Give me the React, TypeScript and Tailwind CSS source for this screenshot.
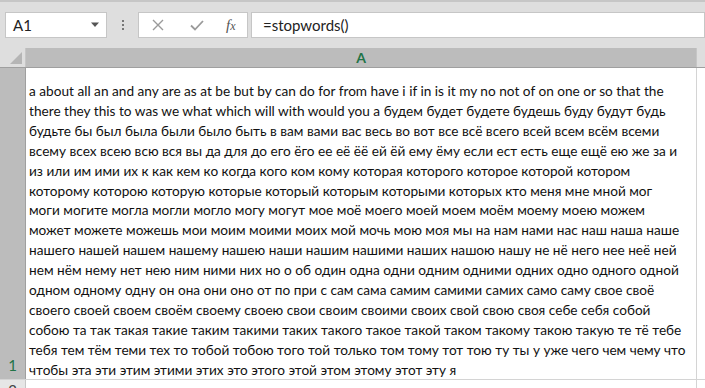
const lines = [
  'a about all an and any are as at be but by can do for from have i if in is it my no not of on one or so that the',
  'there they this to was we what which will with would you a будем будет будете будешь буду будут будь',
  'будьте бы был была были было быть в вам вами вас весь во вот все всё всего всей всем всём всеми',
  'всему всех всею всю вся вы да для до его ёго ее её ёё ей ёй ему ёму если ест есть еще ещё ею же за и',
  'из или им ими их к как кем ко когда кого ком кому которая которого которое которой котором',
  'которому которою которую которые который которым которыми которых кто меня мне мной мог',
  'моги могите могла могли могло могу могут мое моё моего моей моем моём моему моею можем',
  'может можете можешь мои моим моими моих мой мочь мою моя мы на нам нами нас наш наша наше',
  'нашего нашей нашем нашему нашею наши нашим нашими наших нашою нашу не нё него нее неё ней',
  'нем нём нему нет нею ним ними них но о об один одна одни одним одними одних одно одного одной',
  'одном одному одну он она они оно от по при с сам сама самим самими самих само саму свое своё',
  'своего своей своем своём своему своею свои своим своими своих свой свою своя себе себя собой',
  'собою та так такая такие таким такими таких такого такое такой таком такому такою такую те тё тебе',
  'тебя тем тём теми тех то тобой тобою того той только том тому тот тою ту ты у уже чего чем чему что',
  'чтобы эта эти этим этими этих это этого этой этом этому этот эту я',
]

export default function App() {
  return (
    <div className="w-[705px] h-[388px] overflow-hidden bg-[#e6e6e6] font-['Lato','Noto_Sans',sans-serif] text-[#222]">
      {/* formula bar */}
      <div className="h-[48px] border-t-2 border-[#c6c6c6] bg-[#dedede] flex items-start pt-[10px] pl-[5px]">
        <div className="w-[102px] h-[26px] bg-white border border-[#c6c6c6] flex items-center justify-between pl-[7px] pr-[6px]">
          <span className="text-[15px]">A1</span>
          <svg width="10" height="6" viewBox="0 0 10 6"><path d="M1 0.5h8L5 5z" fill="#555" /></svg>
        </div>
        <div className="w-[31px] h-[26px] flex flex-col items-center justify-center gap-[2px]">
          <span className="w-[2px] h-[2px] bg-[#777]" />
          <span className="w-[2px] h-[2px] bg-[#777]" />
          <span className="w-[2px] h-[2px] bg-[#777]" />
        </div>
        <div className="w-[110px] h-[26px] bg-white border border-[#c6c6c6] flex items-center">
          <svg className="ml-[13px]" width="12" height="12" viewBox="0 0 12 12"><path d="M1 1l10 10M11 1L1 11" stroke="#9a9a9a" strokeWidth="1.4" /></svg>
          <svg className="ml-[26px]" width="14" height="12" viewBox="0 0 14 12"><path d="M1 6.5l4 4L13 2" stroke="#9a9a9a" strokeWidth="1.8" fill="none" /></svg>
          <span className="ml-[22px] font-['Liberation_Serif',serif] italic text-[15px] text-[#555]">f<span className="text-[12px]">x</span></span>
        </div>
        <div className="ml-[3px] flex-1 h-[26px] bg-white border border-[#c6c6c6] flex items-center pl-[11px]">
          <span className="text-[15px]">=stopwords()</span>
        </div>
      </div>

      {/* column header */}
      <div className="flex h-[20px] border-b border-[#9f9f9f]">
        <div className="w-[26px] bg-[#dedede] border-r border-[#c6c6c6] relative">
          <svg className="absolute right-[3px] bottom-[3px]" width="12" height="12" viewBox="0 0 12 12"><path d="M12 0V12H0z" fill="#b5b5b5" /></svg>
        </div>
        <div className="w-[670px] bg-[#bcbcbc] flex items-center justify-center">
          <span className="text-[#217346] font-bold text-[14px]">A</span>
        </div>
        <div className="flex-1 bg-[#dedede] border-l border-[#c6c6c6]" />
      </div>

      {/* row 1 */}
      <div className="flex h-[312px] border-b border-[#d4d4d4]">
        <div className="w-[26px] bg-[#bcbcbc] border-r border-[#9f9f9f] flex items-end justify-center pb-[3px]">
          <span className="text-[#217346] text-[15px]">1</span>
        </div>
        <div className="w-[670px] bg-white pl-[3px] pt-[14px] text-[13.65px] leading-[19.9px] text-[#111]">
          {lines.map((l, i) => (
            <div key={i} className="whitespace-nowrap">{l}</div>
          ))}
        </div>
        <div className="flex-1 bg-white border-l border-[#d4d4d4]" />
      </div>

      {/* row 2 */}
      <div className="flex h-[20px]">
        <div className="w-[26px] bg-[#e6e6e6] border-r border-[#c6c6c6] flex justify-center pt-[2px]">
          <span className="text-[#444] text-[15px] leading-[16px]">2</span>
        </div>
        <div className="w-[670px] bg-white" />
        <div className="flex-1 bg-white border-l border-[#d4d4d4]" />
      </div>
    </div>
  )
}
